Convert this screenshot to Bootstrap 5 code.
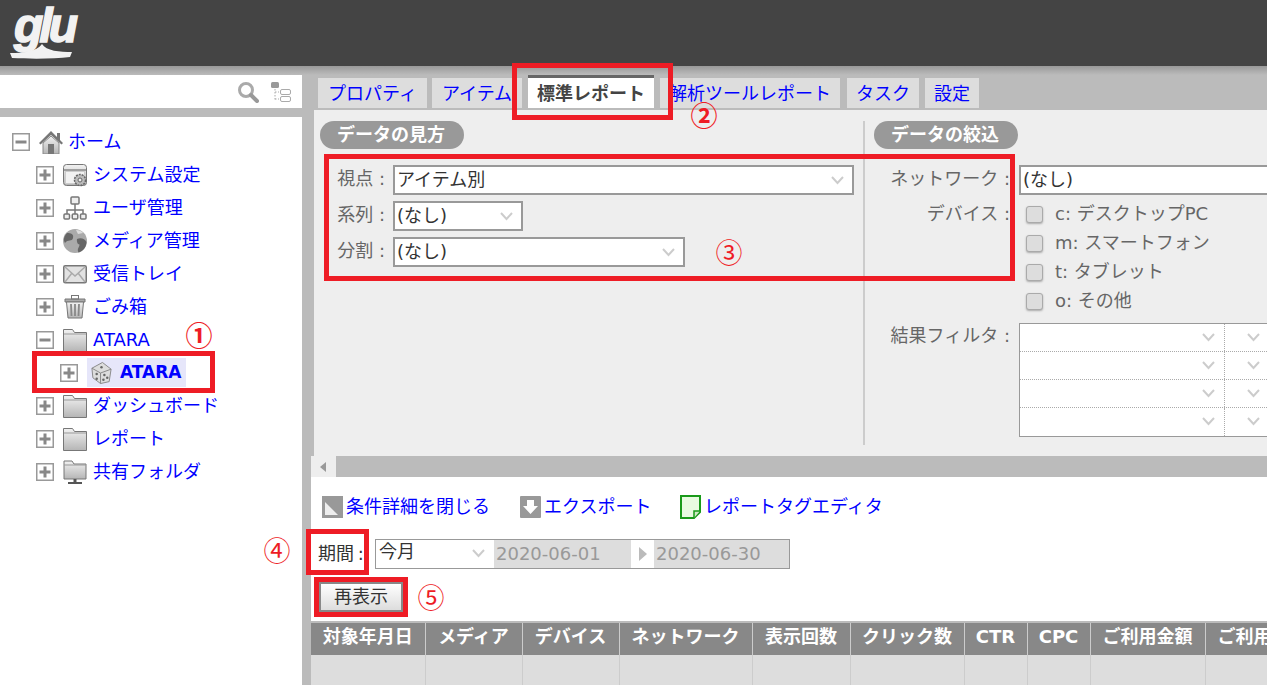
<!DOCTYPE html>
<html lang="ja">
<head>
<meta charset="utf-8">
<title>glu</title>
<link href="https://cdn.jsdelivr.net/npm/bootstrap@5.3.0/dist/css/bootstrap.min.css" rel="stylesheet">
<style>
html,body{height:685px;overflow:hidden}
body{background:#bbb;font-family:"DejaVu Sans","Noto Sans CJK JP",sans-serif;font-size:18px;color:#555;position:relative;font-weight:400}
a{color:#00f;text-decoration:none}
.g-head{height:66px;background:#444;padding:1px 0 0 11px}
.g-strip{height:9px;background:linear-gradient(#999,#bbb)}
.g-logo{position:relative;width:70px;height:60px;color:#f2f2f2}
.g-logo span{font:italic 700 48px/50px "Liberation Sans",sans-serif;letter-spacing:-4px;display:block;padding:0 0 0 3px;-webkit-text-stroke:1.5px #f2f2f2}
.g-logo svg{position:absolute;left:-1px;top:43px}
.g-left{width:302px;flex:none}
.g-search{height:33px;background:#fff;gap:11px;padding-right:10px}
.g-tree{margin-top:9px;background:#fff;height:568px;padding:8px 0 0 12px}
.g-row{height:33px;font-size:18px;line-height:33px}
.g-l1{margin-left:24px}
.g-l2{margin-left:48px}
.g-toggle{width:18px;height:18px;flex:none;margin-right:9px}
.g-ico{width:24px;height:24px;flex:none;margin-right:6px}
.g-l0ico{margin-right:5px}
.g-row>a.g-sel{background:#e6e6fa;height:29px;line-height:29px;margin:0;width:99px;font-weight:700;font-size:17px}
.g-sel .g-ico{margin:0 7px 0 3px;width:23px;height:24px}
.g-right{width:956px;flex:none;margin-left:9px}
.g-tabs{height:35px;padding:3px 0 2px 7px;gap:5px}
.g-tab{height:30px;background:#ddd;font-size:18px;line-height:31px;text-align:center;display:block}
.g-t1{width:109px}.g-t2{width:90px}
.g-tab.g-on{width:126px;height:33px;margin:-3px 0 0 1px;background:#fff;border-top:3px solid #666;color:#444;font-weight:700;line-height:31px}
.g-t4{width:180px;margin-left:1px}.g-t5{width:72px;margin-left:2px}.g-t6{width:54px;margin-left:1px}
.g-panel{height:346px;margin-left:3px;background:#eee;overflow:hidden;padding-top:11px}
.g-side-a{width:551px;flex:none;height:324px;padding-left:6px;border-right:2px solid #ccc}
.g-side-b{flex:1;padding-left:9px;min-width:0}
.g-pill{display:inline-block;height:28px;line-height:28px;border-radius:14px;background:#999;color:#fff;font-weight:700;font-size:18px;padding:0 19px 0 17px}
.g-line{display:flex;align-items:center;height:30px;margin-bottom:6px}
.g-line-n{margin-bottom:4px}
.g-lab{flex:none;white-space:nowrap;text-align:right;color:#666;font-size:18px;line-height:26px}
.g-line .g-lab{margin-top:-2px}
.g-lab-dev{margin-top:2px}
.g-lab-a{width:73px;padding-right:8px}
.g-lab-b{width:145px;padding-right:9px}
select.g-input{height:30px;border:2px solid #999;border-radius:0;background-color:#fff;font-size:18px;color:#333;padding:0 24px 1px 2px;line-height:24px;box-shadow:none;background-position:right 8px center;background-size:13px 9px;
background-image:url("data:image/svg+xml,%3Csvg xmlns='http://www.w3.org/2000/svg' viewBox='0 0 13 9'%3E%3Cpath d='M1 1l5.500 6L12 1' fill='none' stroke='%23ccc' stroke-width='2'/%3E%3C/svg%3E")}
.g-w461{width:461px}.g-w130{width:130px}.g-w292{width:292px}.g-w300{width:300px;flex:none}
.g-checks{padding-left:7px}
.g-chk{height:29px;gap:12px;font-size:18px;color:#666;display:flex;align-items:center;line-height:26px}
.g-chk .form-check-input{width:17px;height:17px;margin:2px 0 0;background-color:#ddd;border:1px solid #aaa;border-radius:3px;box-shadow:0 1px 2px #aaa;float:none;flex:none}
.g-fil{width:300px;flex:none;background:#fff;border:1px solid #999;border-right:0}
.g-filrow{height:28px;border-bottom:1px dotted #aaa}
.g-filrow:last-child{border-bottom:0}
.g-c1{width:205px;height:100%;border-right:1px dotted #aaa;position:relative}
.g-c2{flex:1;position:relative}
.g-chev{position:absolute;top:9px;right:9px;width:13px;height:9px}
.g-c2 .g-chev{left:22px;right:auto}
.g-scroll{height:21px}
.g-sbtn{width:25px;background:#eee}
.g-sbar{flex:1;background:#bbb}
.g-pane{background:#fff;height:208px;overflow:hidden}
.g-links{height:62px;padding:17px 0 0 11px;font-size:18px;line-height:26px}
.g-links a{display:flex;align-items:center;height:26px}
.g-links svg{margin-right:3px;flex:none}
.g-li1{width:198px}.g-li2{width:160px}
.g-period{height:31px;padding-left:7px}
.g-plab{width:57px;color:#333;font-size:18px;flex:none;line-height:30px;white-space:nowrap;word-spacing:-2px}
.g-pbox{width:415px;height:30px;border:1px solid #999;background:#ddd;font-size:18px}
.g-pmon{width:118px;background:#fff;height:100%;color:#333;position:relative;padding-left:3px;line-height:24px;font-size:18px}
.g-pd{color:#999;line-height:26px;width:137px;padding-left:2px}
.g-pd2{width:auto}
.g-parr{width:23px;background:#fff;height:100%}
.btn.g-btn{display:block;margin:12px 0 0 8px;width:84px;height:30px;padding:0;border:2px solid #888;border-radius:0;background:linear-gradient(#fff,#ddd);color:#333;font-size:18px;line-height:26px;font-family:inherit}
table.g-tbl{table-layout:fixed;width:1100px;margin:9px 0 0;border-collapse:collapse}
.g-tbl th{background:#888;color:#fff;font-size:18px;font-weight:700;height:33px;padding:0;text-align:center;border:0;border-left:1px solid #ccc;border-top:2px solid #bbb;white-space:nowrap;overflow:hidden;line-height:28px;box-shadow:none}
.g-tbl td{background:#ddd;height:40px;padding:0;border:0;border-left:1px solid #ccc;box-shadow:none}
.g-tbl th:first-child,.g-tbl td:first-child{border-left:0}
.g-tbl th:nth-child(1){width:114px}.g-tbl th:nth-child(2){width:97px}.g-tbl th:nth-child(3){width:97px}.g-tbl th:nth-child(4){width:133px}.g-tbl th:nth-child(5){width:98px}.g-tbl th:nth-child(6){width:114px}.g-tbl th:nth-child(7){width:63px}.g-tbl th:nth-child(8){width:63px}.g-tbl th:nth-child(9){width:115px}.g-tbl th:nth-child(10){width:206px;text-align:left;padding-left:12px}
.g-rb{position:absolute;border:5px solid #ee1c25;pointer-events:none}
.g-r1{left:32px;top:351px;width:183px;height:42px}
.g-r2{left:512px;top:63px;width:161px;height:57px}
.g-r3{left:324px;top:154px;width:691px;height:127px}
.g-r4{left:306px;top:529px;width:63px;height:46px}
.g-r5{left:314px;top:577px;width:94px;height:40px}
.g-num{position:absolute;color:#ee1c25;font-size:27px;line-height:30px;width:30px;text-align:center;font-family:"Noto Sans CJK JP",sans-serif}
.g-n1{left:184px;top:320px;font-weight:700}.g-n2{left:689px;top:100px;font-weight:700}.g-n3{left:714px;top:237px}.g-n4{left:262px;top:535px}.g-n5{left:416px;top:582px}
</style>
</head>
<body>
<div class="g-head">
  <div class="g-logo"><span>glu</span>
    <svg width="64" height="16" viewBox="0 0 64 16"><path d="M0 9C14 9 26 8 32 0 36 7 50 8 62 8L60 13C44 15 20 15 2 14Z" fill="#f2f2f2"/></svg>
  </div>
</div>
<div class="g-strip"></div>
<div class="d-flex">
  <div class="g-left">
    <div class="g-search d-flex align-items-center justify-content-end">
      <svg width="22" height="22" viewBox="0 0 22 22"><circle cx="9" cy="9" r="6.500" fill="none" stroke="#aaa" stroke-width="3"/><path d="M14 14l6 6" stroke="#999" stroke-width="4" stroke-linecap="round"/></svg>
      <svg width="22" height="22" viewBox="0 0 22 22"><rect x="1" y="1" width="8" height="6" rx="1.500" fill="#999"/><rect x="10.500" y="8.500" width="10" height="5" rx="1.500" fill="#fff" stroke="#aaa"/><rect x="10.500" y="15.500" width="10" height="5" rx="1.500" fill="#fff" stroke="#aaa"/><path d="M5 8v11M5 11h4M5 18h4" stroke="#aaa" stroke-dasharray="1.500 1.500" fill="none"/></svg>
    </div>
    <div class="g-tree">
      <div class="g-row d-flex align-items-center">
        <svg class="g-toggle"><use href="#minus"/></svg>
        <svg class="g-ico g-l0ico" viewBox="0 0 24 24"><path d="M0 13 12 1l6 6V3h3v7l3 3-1.500 1.500L12 5 1.500 14.500z" fill="#777"/><path d="M4 13 12 6l8 7v11H4z" fill="url(#sh)" stroke="#888"/><rect x="9" y="14" width="6" height="10" fill="#777"/></svg>
        <a href="#">ホーム</a>
      </div>
      <div class="g-row g-l1 d-flex align-items-center">
        <svg class="g-toggle"><use href="#plus"/></svg>
        <svg class="g-ico" viewBox="0 0 24 24"><rect x="0.500" y="1.500" width="23" height="21" rx="3" fill="url(#sh)" stroke="#777"/><path d="M1 7h22" stroke="#888" stroke-width="1.500"/><rect x="2.500" y="8.500" width="19" height="12" fill="#f2f2f2" stroke="#ccc"/><circle cx="17" cy="17" r="5.500" fill="#bbb" stroke="#666" stroke-width="1.500" stroke-dasharray="2 1"/><circle cx="17" cy="17" r="2" fill="#eee" stroke="#666"/></svg>
        <a href="#">システム設定</a>
      </div>
      <div class="g-row g-l1 d-flex align-items-center">
        <svg class="g-toggle"><use href="#plus"/></svg>
        <svg class="g-ico" viewBox="0 0 24 24"><g fill="#eee" stroke="#777" stroke-width="1.500"><rect x="8" y="1" width="8" height="7" rx="1"/><rect x="1" y="18" width="5.500" height="5" rx="1"/><rect x="9.250" y="18" width="5.500" height="5" rx="1"/><rect x="17.500" y="18" width="5.500" height="5" rx="1"/></g><path d="M12 8v10M4 18v-4h16v4" fill="none" stroke="#777" stroke-width="1.500"/></svg>
        <a href="#">ユーザ管理</a>
      </div>
      <div class="g-row g-l1 d-flex align-items-center">
        <svg class="g-toggle"><use href="#plus"/></svg>
        <svg class="g-ico" viewBox="0 0 24 24"><circle cx="12" cy="12" r="12" fill="#aaa"/><path d="M4 4c4 0 7 1 6 5s-5 1-8 5c-2-3-1-7 2-10zM14 10c4-2 8 0 9.500 3 0 5-4 10-8 10.500-2-4 1-5 1-8-2 0-3-3-2.500-5.500z" fill="#666"/><path d="M13 1c3 0 6 1 7 3l-5 1z" fill="#ddd"/></svg>
        <a href="#">メディア管理</a>
      </div>
      <div class="g-row g-l1 d-flex align-items-center">
        <svg class="g-toggle"><use href="#plus"/></svg>
        <svg class="g-ico" viewBox="0 0 24 24"><rect x="0.750" y="3.750" width="22.500" height="17" rx="1.500" fill="#e2e2e2" stroke="#777" stroke-width="1.500"/><path d="M2 5l10 9L22 5M2 20l7-9M22 20l-7-9" fill="none" stroke="#aaa" stroke-width="1.500"/></svg>
        <a href="#">受信トレイ</a>
      </div>
      <div class="g-row g-l1 d-flex align-items-center">
        <svg class="g-toggle"><use href="#plus"/></svg>
        <svg class="g-ico" viewBox="0 0 24 24"><path d="M2 4h20v3H2z" fill="#aaa" stroke="#777"/><rect x="8.500" y="0.500" width="7" height="3.500" fill="none" stroke="#777"/><path d="M3.500 7h17l-1.500 16H5z" fill="url(#sh)" stroke="#777"/><path d="M8 9l.5 12M12 9v12M16 9l-.5 12" stroke="#888" stroke-width="1.800"/></svg>
        <a href="#">ごみ箱</a>
      </div>
      <div class="g-row g-l1 d-flex align-items-center">
        <svg class="g-toggle"><use href="#minus"/></svg>
        <svg class="g-ico"><use href="#folder"/></svg>
        <a href="#">ATARA</a>
      </div>
      <div class="g-row g-l2 d-flex align-items-center">
        <svg class="g-toggle"><use href="#plus"/></svg>
        <a href="#" class="g-sel d-flex align-items-center">
          <svg class="g-ico" viewBox="0 0 24 24"><path d="M2 7 13 1l9 7-2 13-9 2-8-6z" fill="#ddd" stroke="#888"/><path d="M2 7l9 5 11-4M11 12v11" fill="none" stroke="#888"/><g fill="#666"><circle cx="7" cy="13" r="1.300"/><circle cx="7" cy="18" r="1.300"/><circle cx="15" cy="14" r="1.300"/><circle cx="18" cy="17" r="1.300"/><circle cx="14" cy="19" r="1.300"/><circle cx="12" cy="6" r="1.300"/></g></svg>ATARA</a>
      </div>
      <div class="g-row g-l1 d-flex align-items-center">
        <svg class="g-toggle"><use href="#plus"/></svg>
        <svg class="g-ico"><use href="#folder"/></svg>
        <a href="#">ダッシュボード</a>
      </div>
      <div class="g-row g-l1 d-flex align-items-center">
        <svg class="g-toggle"><use href="#plus"/></svg>
        <svg class="g-ico"><use href="#folder"/></svg>
        <a href="#">レポート</a>
      </div>
      <div class="g-row g-l1 d-flex align-items-center">
        <svg class="g-toggle"><use href="#plus"/></svg>
        <svg class="g-ico" viewBox="0 0 24 24"><path d="M1 1h8l2 3h12v15H1z" fill="url(#sh)" stroke="#777"/><path d="M1 5h22" stroke="#999"/><path d="M12 19v3" stroke="#555" stroke-width="3"/><path d="M5 23h14" stroke="#555" stroke-width="2"/></svg>
        <a href="#">共有フォルダ</a>
      </div>
    </div>
  </div>
  <div class="g-right">
    <div class="g-tabs d-flex">
      <a href="#" class="g-tab g-t1">プロパティ</a>
      <a href="#" class="g-tab g-t2">アイテム</a>
      <span class="g-tab g-on">標準レポート</span>
      <a href="#" class="g-tab g-t4">解析ツールレポート</a>
      <a href="#" class="g-tab g-t5">タスク</a>
      <a href="#" class="g-tab g-t6">設定</a>
    </div>
    <div class="g-panel d-flex">
      <div class="g-side-a">
        <div class="g-pill">データの見方</div>
        <div class="mt-3">
          <div class="g-line"><span class="g-lab g-lab-a">視点 :</span><select class="form-select g-input g-w461"><option>アイテム別</option></select></div>
          <div class="g-line"><span class="g-lab g-lab-a">系列 :</span><select class="form-select g-input g-w130"><option>(なし)</option></select></div>
          <div class="g-line"><span class="g-lab g-lab-a">分割 :</span><select class="form-select g-input g-w292"><option>(なし)</option></select></div>
        </div>
      </div>
      <div class="g-side-b">
        <div class="g-pill">データの絞込</div>
        <div class="mt-3">
          <div class="g-line g-line-n"><span class="g-lab g-lab-b">ネットワーク :</span><select class="form-select g-input g-w300"><option>(なし)</option></select></div>
          <div class="d-flex">
            <span class="g-lab g-lab-b g-lab-dev">デバイス :</span>
            <div class="g-checks">
              <label class="g-chk"><input class="form-check-input" type="checkbox">c: デスクトップPC</label>
              <label class="g-chk"><input class="form-check-input" type="checkbox">m: スマートフォン</label>
              <label class="g-chk"><input class="form-check-input" type="checkbox">t: タブレット</label>
              <label class="g-chk"><input class="form-check-input" type="checkbox">o: その他</label>
            </div>
          </div>
          <div class="d-flex mt-2">
            <span class="g-lab g-lab-b">結果フィルタ :</span>
            <div class="g-fil">
              <div class="g-filrow d-flex"><div class="g-c1"><svg class="g-chev"><use href="#chev"/></svg></div><div class="g-c2"><svg class="g-chev"><use href="#chev"/></svg></div></div>
              <div class="g-filrow d-flex"><div class="g-c1"><svg class="g-chev"><use href="#chev"/></svg></div><div class="g-c2"><svg class="g-chev"><use href="#chev"/></svg></div></div>
              <div class="g-filrow d-flex"><div class="g-c1"><svg class="g-chev"><use href="#chev"/></svg></div><div class="g-c2"><svg class="g-chev"><use href="#chev"/></svg></div></div>
              <div class="g-filrow d-flex"><div class="g-c1"><svg class="g-chev"><use href="#chev"/></svg></div><div class="g-c2"><svg class="g-chev"><use href="#chev"/></svg></div></div>
            </div>
          </div>
        </div>
      </div>
    </div>
    <div class="g-scroll d-flex">
      <div class="g-sbtn d-flex align-items-center justify-content-center"><svg width="7" height="10" viewBox="0 0 7 10"><path d="M6 0v10L0 5z" fill="#999"/></svg></div>
      <div class="g-sbar"></div>
    </div>
    <div class="g-pane">
      <div class="g-links d-flex">
        <a href="#" class="g-li1"><svg width="21" height="22" viewBox="0 0 21 22"><rect width="21" height="22" fill="#999"/><path d="M3 6v13h13z" fill="#eee"/></svg>条件詳細を閉じる</a>
        <a href="#" class="g-li2"><svg width="21" height="22" viewBox="0 0 21 22"><rect width="21" height="22" rx="1" fill="#999"/><path d="M7 4h7v6h4l-7.500 8L3 10h4z" fill="#fff"/></svg>エクスポート</a>
        <a href="#"><svg width="21" height="24" viewBox="0 0 21 24"><path d="M1 1h19v16l-6 6H1z" fill="#e8fbe0" stroke="#1a9a1a" stroke-width="2"/><path d="M20 16h-6v7" fill="#cfe8c4" stroke="#1a9a1a" stroke-width="1.500"/></svg>レポートタグエディタ</a>
      </div>
      <div class="g-period d-flex align-items-start">
        <span class="g-plab">期間 :</span>
        <div class="g-pbox d-flex align-items-center">
          <div class="g-pmon">今月<svg class="g-chev"><use href="#chev"/></svg></div>
          <div class="g-pd">2020-06-01</div>
          <div class="g-parr d-flex align-items-center justify-content-center"><svg width="8" height="14" viewBox="0 0 8 14"><path d="M0 0l8 7-8 7z" fill="#bbb"/></svg></div>
          <div class="g-pd g-pd2">2020-06-30</div>
        </div>
      </div>
      <button type="button" class="btn g-btn">再表示</button>
      <table class="table g-tbl">
        <tr><th>対象年月日</th><th>メディア</th><th>デバイス</th><th>ネットワーク</th><th>表示回数</th><th>クリック数</th><th>CTR</th><th>CPC</th><th>ご利用金額</th><th>ご利用金額</th></tr>
        <tr><td></td><td></td><td></td><td></td><td></td><td></td><td></td><td></td><td></td><td></td></tr>
      </table>
    </div>
  </div>
</div>

<div class="g-rb g-r1"></div>
<div class="g-rb g-r2"></div>
<div class="g-rb g-r3"></div>
<div class="g-rb g-r4"></div>
<div class="g-rb g-r5"></div>
<div class="g-num g-n1">①</div>
<div class="g-num g-n2">②</div>
<div class="g-num g-n3">③</div>
<div class="g-num g-n4">④</div>
<div class="g-num g-n5">⑤</div>

<svg width="0" height="0" class="position-absolute">
  <defs><linearGradient id="sh" x1="0" y1="0" x2="0" y2="1"><stop offset="0" stop-color="#f2f2f2"/><stop offset="1" stop-color="#b5b5b5"/></linearGradient></defs>
  <symbol id="plus" viewBox="0 0 18 18"><rect x="0.750" y="0.750" width="16.500" height="16.500" fill="#fff" stroke="#999" stroke-width="1.500"/><path d="M3.500 9h11M9 3.500v11" stroke="#888" stroke-width="3"/></symbol>
  <symbol id="minus" viewBox="0 0 18 18"><rect x="0.750" y="0.750" width="16.500" height="16.500" fill="#fff" stroke="#999" stroke-width="1.500"/><path d="M3.500 9h11" stroke="#888" stroke-width="3"/></symbol>
  <symbol id="folder" viewBox="0 0 24 24"><path d="M0.500 1.500h9l2 3h12v19h-23z" fill="url(#sh)" stroke="#777"/><path d="M1 6h22" stroke="#999"/></symbol>
  <symbol id="chev" viewBox="0 0 13 9"><path d="M1 1l5.500 6L12 1" fill="none" stroke="#ccc" stroke-width="2"/></symbol>
</svg>
<script src="https://cdn.jsdelivr.net/npm/bootstrap@5.3.0/dist/js/bootstrap.bundle.min.js"></script>
</body>
</html>
